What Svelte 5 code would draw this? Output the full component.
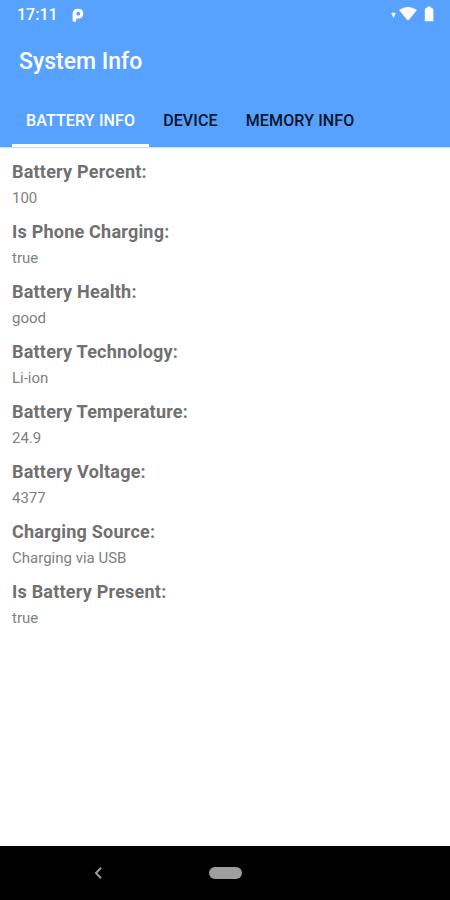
<script>
	const tabs = ['Battery Info', 'Device', 'Memory Info'];
	let active = $state(0);

	const info = [
		{ label: 'Battery Percent:', value: '100' },
		{ label: 'Is Phone Charging:', value: 'true' },
		{ label: 'Battery Health:', value: 'good' },
		{ label: 'Battery Technology:', value: 'Li-ion' },
		{ label: 'Battery Temperature:', value: '24.9' },
		{ label: 'Battery Voltage:', value: '4377' },
		{ label: 'Charging Source:', value: 'Charging via USB' },
		{ label: 'Is Battery Present:', value: 'true' }
	];
</script>

<div class="screen">
	<header>
		<div class="status">
			<span class="clock">17:11</span>
			<svg class="p-icon" width="12" height="15" viewBox="0 0 12 15">
				<path fill-rule="evenodd" d="M.6 5.6Q.8.7 6 .7q5.3 0 5.3 4.8 0 5-5.1 5.1H4.3v1.6q0 1.8-1.9 1.8T.6 12.2zM6.2 3.8a1.9 1.9 0 1 0 .01 0z" fill="#fff" />
			</svg>
			<svg class="signal" width="36" height="18" viewBox="0 0 36 18">
				<path d="M1.2 7.2Q3.5 6 5.8 7.2L3.5 12.2Z" fill="#fff" opacity=".85" />
				<path d="M9 4.1Q18-1.9 27 4.1L18.7 14Q18 14.8 17.3 14Z" fill="#fff" />
			</svg>
			<svg class="battery" width="10" height="16" viewBox="0 0 10 16">
				<path d="M3.4 0.4h3.2v1.2Q9.4 2 9.4 4v11.2H.8V4q0-2 2.6-2.4z" fill="#fff" />
			</svg>
		</div>
		<h1>System Info</h1>
		<nav>
			{#each tabs as tab, i}
				<button class:active={active === i} onclick={() => (active = i)}>{tab}</button>
			{/each}
		</nav>
	</header>

	<main>
		{#each info as item}
			<section>
				<h2>{item.label}</h2>
				<p>{item.value}</p>
			</section>
		{/each}
	</main>

	<footer>
		<svg class="back" width="10" height="14" viewBox="0 0 10 14">
			<path d="M8 1.8L3 7l5 5.2" fill="none" stroke="#999" stroke-width="2" />
		</svg>
		<div class="home"></div>
	</footer>
</div>

<style>
	:global(body) {
		margin: 0;
		background: #fff;
	}
	.screen {
		width: 450px;
		height: 900px;
		display: flex;
		flex-direction: column;
		font-family: Roboto, sans-serif;
		overflow: hidden;
	}
	header {
		height: 147px;
		background: #57a2ff;
		box-shadow: 0 1px 1px rgba(87, 162, 255, 0.35);
		color: #fff;
		display: flex;
		flex-direction: column;
	}
	.status {
		height: 30px;
		display: flex;
		align-items: center;
		padding: 0 16px 0 17px;
	}
	.clock {
		font-size: 16px;
		font-weight: 500;
		line-height: 30px;
		width: 55px;
	}
	.signal {
		margin-left: auto;
	}
	.battery {
		margin: -2px 0 0 -2px;
	}
	h1 {
		margin: 0;
		padding-left: 19px;
		font-size: 23px;
		font-weight: 500;
		line-height: 64px;
	}
	nav {
		flex: 1;
		display: flex;
		padding-left: 12px;
	}
	button {
		border: 0;
		border-bottom: 3px solid transparent;
		background: none;
		padding: 2px 14px 0;
		font-family: inherit;
		font-size: 16px;
		font-weight: 500;
		letter-spacing: 0.13px;
		text-transform: uppercase;
		color: #06152b;
		white-space: nowrap;
	}
	button.active {
		color: #fff;
		border-bottom-color: #fff;
	}
	main {
		flex: 1;
		padding: 12px 12px 0;
		color: #808080;
	}
	section {
		height: 60px;
	}
	h2 {
		margin: 0;
		font-size: 18px;
		font-weight: 700;
		line-height: 26px;
		letter-spacing: 0.22px;
		color: #707070;
	}
	p {
		margin: 0;
		font-size: 15px;
		line-height: 26px;
	}
	footer {
		height: 54px;
		background: #000;
		display: flex;
		align-items: center;
		padding-left: 93px;
	}
	.home {
		margin-left: 106px;
		width: 33px;
		height: 12px;
		border-radius: 6px;
		background: #9e9e9e;
	}
</style>
